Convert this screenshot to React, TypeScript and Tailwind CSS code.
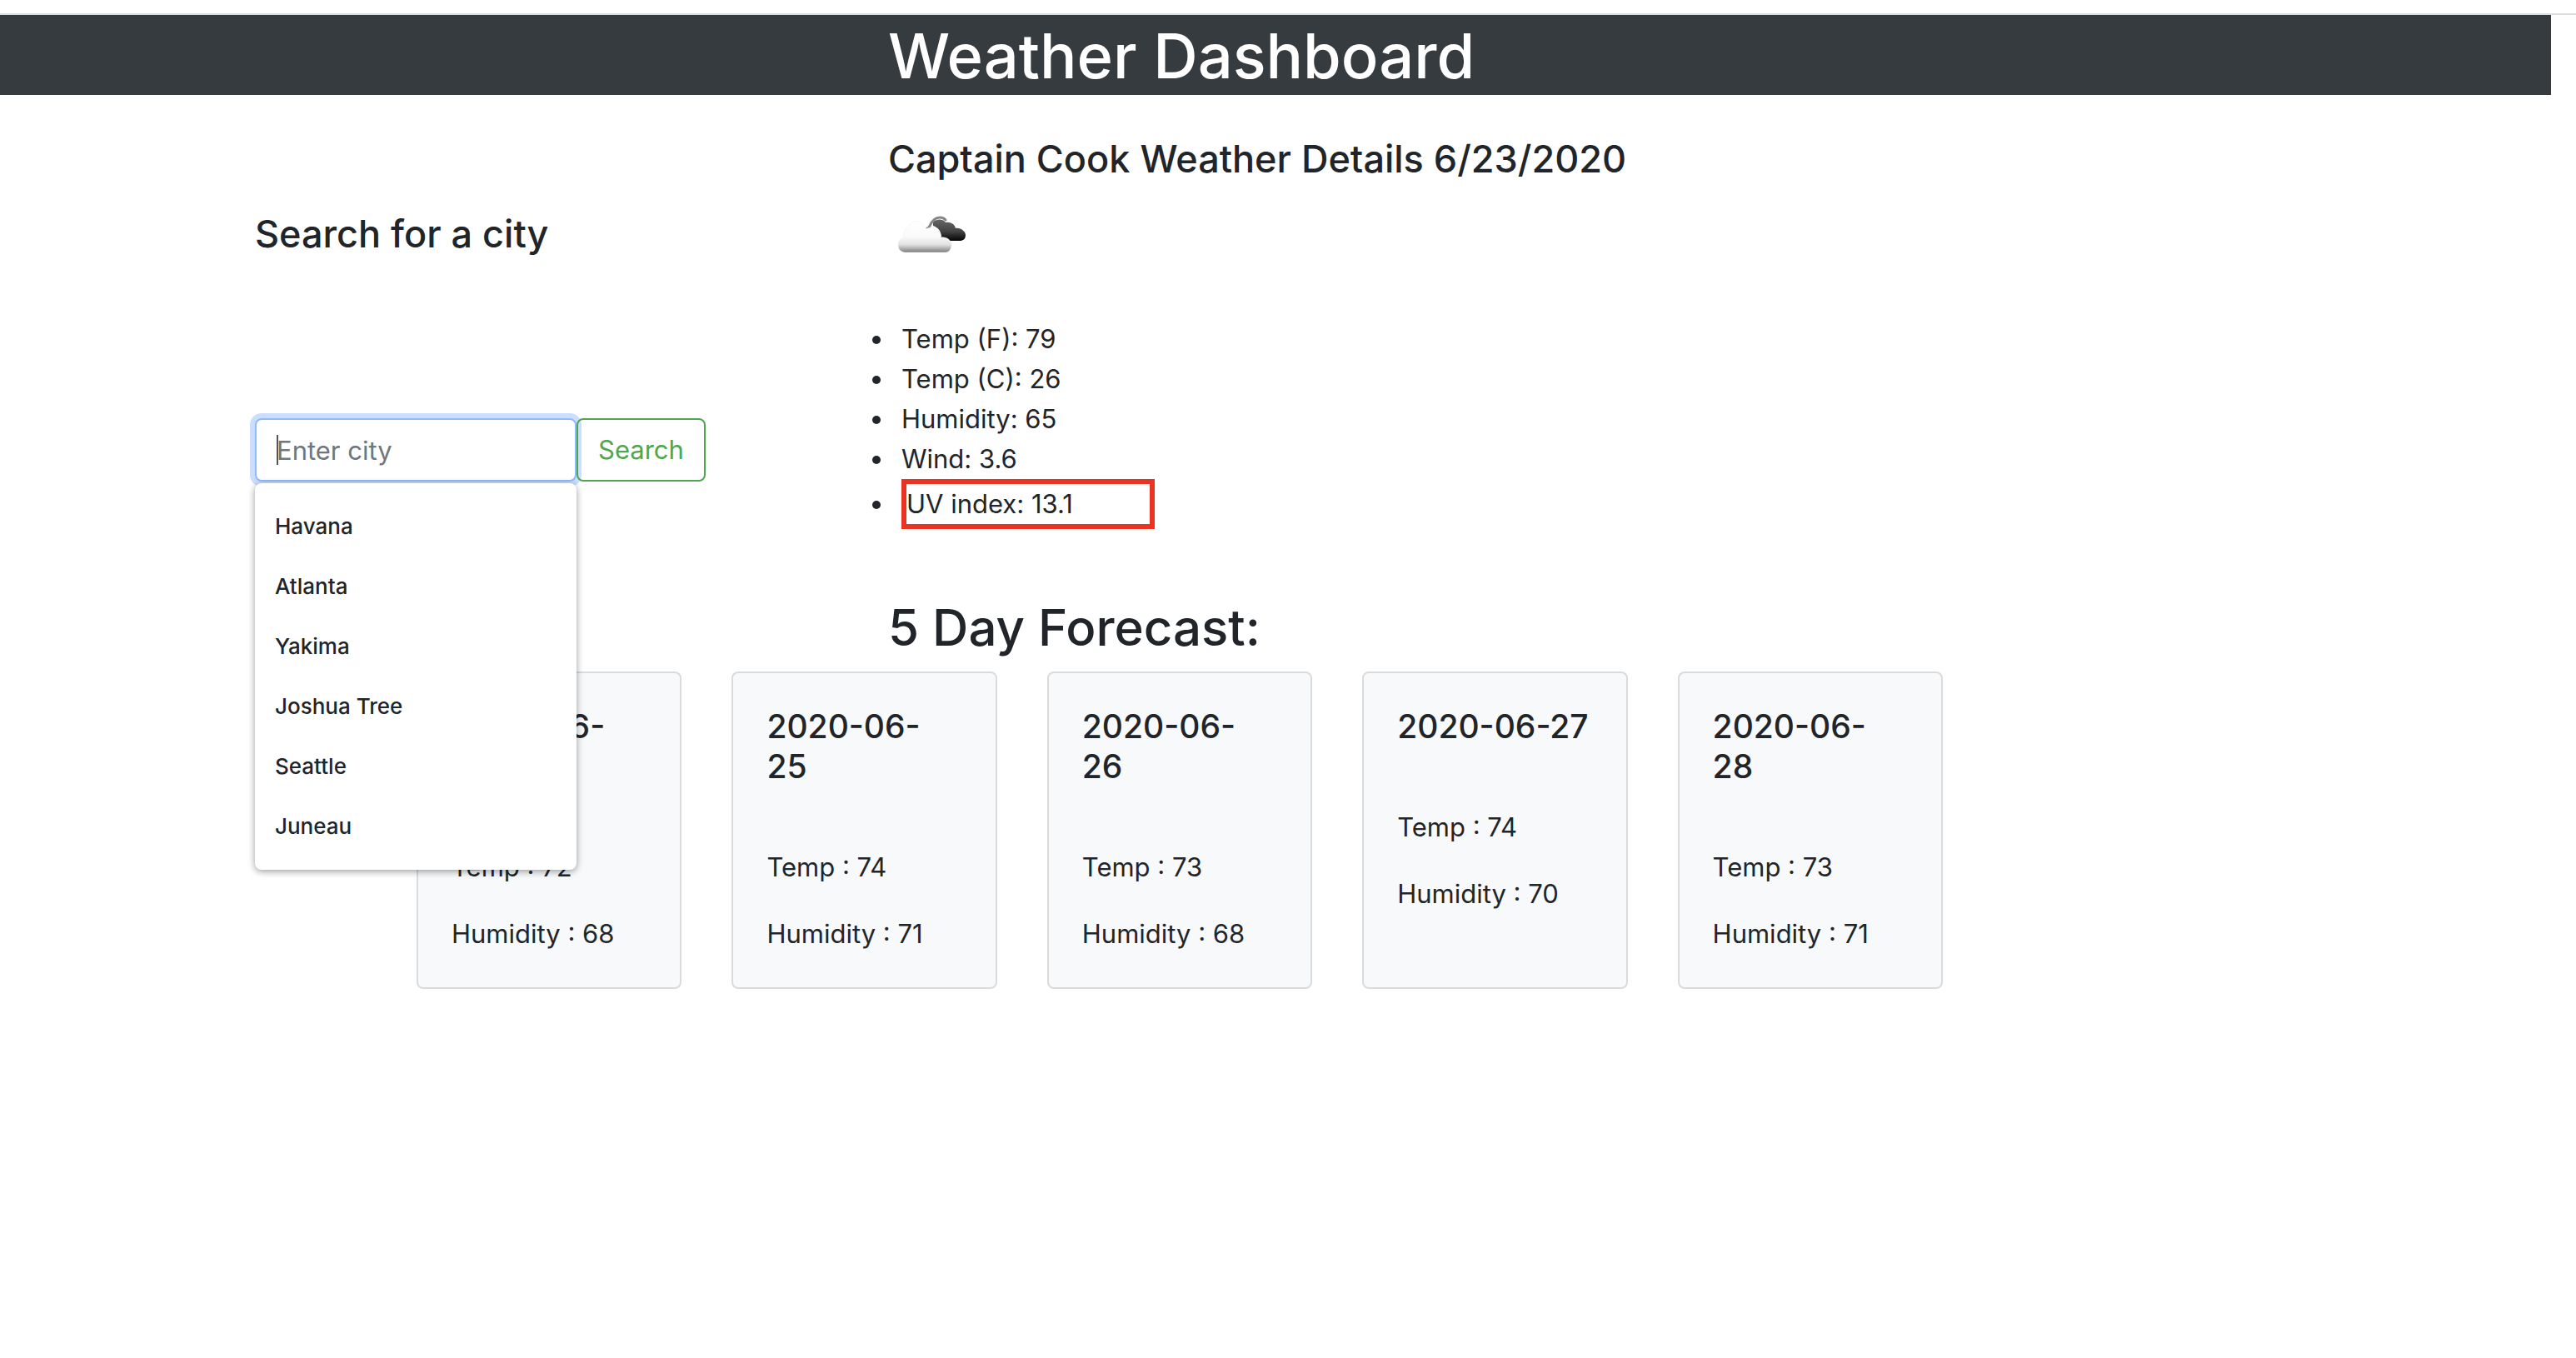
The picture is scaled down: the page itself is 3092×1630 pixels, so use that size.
const cities = ["Havana", "Atlanta", "Yakima", "Joshua Tree", "Seattle", "Juneau"];

const readings = ["Temp (F): 79", "Temp (C): 26", "Humidity: 65", "Wind: 3.6"];

const forecast = [
  { date: ["2020-06-", "24"], temp: 72, humidity: 68 },
  { date: ["2020-06-", "25"], temp: 74, humidity: 71 },
  { date: ["2020-06-", "26"], temp: 73, humidity: 68 },
  { date: ["2020-06-27"], temp: 74, humidity: 70 },
  { date: ["2020-06-", "28"], temp: 73, humidity: 71 },
];

function BrokenClouds() {
  return (
    <svg viewBox="0 0 100 100" className="size-[100px]" role="img" aria-label="Broken clouds">
      <defs>
        <linearGradient id="front" x1="0" y1="0" x2="0" y2="1">
          <stop offset="0" stopColor="#ffffff" />
          <stop offset="0.5" stopColor="#fafafa" />
          <stop offset="0.75" stopColor="#e2e2e2" />
          <stop offset="0.9" stopColor="#a6a6a6" />
          <stop offset="1" stopColor="#777777" />
        </linearGradient>
        <linearGradient id="back" x1="0" y1="0" x2="0" y2="1">
          <stop offset="0" stopColor="#666666" />
          <stop offset="0.55" stopColor="#444444" />
          <stop offset="1" stopColor="#050505" />
        </linearGradient>
      </defs>
      <path
        d="M47 42 C51 41 50 36 54 33 C58 28 65 28 69 32"
        fill="none"
        stroke="#858585"
        strokeWidth="3"
        strokeLinecap="round"
      />
      <path
        d="M54 35 C57 31 65 30 69 35 C75 34 80 37 81 42 C87 41 93 46 93 50 C93 55 90 57 86 57 L68 57 C64 56 63 54 64 51 C63 45 60 41 54 39 Z"
        fill="url(#back)"
      />
      <path
        d="M20 71 C14 70 12 66 12 62 C12 57 15 54 19 53 C18 46 21 41 26 38 C29 32 38 32 42 38 C43 40 44 41 45 43 C54 38 63 44 63 53 C70 52 76 56 76 62 C76 67 73 71 69 71 Z"
        fill="url(#front)"
        stroke="#f0f0f0"
        strokeWidth="0.6"
      />
    </svg>
  );
}

export default function App() {
  return (
    <div className="min-h-screen bg-white pt-4 font-['Inter',sans-serif] text-[31px] leading-[48px] text-[#212529]">
      <div className="h-0.5 bg-[#dadce0]" />
      <header className="mr-[30px] bg-[#363b3f]">
        <h1 className="mx-auto max-w-[2450px] pt-0.5 pl-[760px] text-[74px] leading-[94px] font-medium text-white">
          Weather Dashboard
        </h1>
      </header>

      <main className="mx-auto max-w-[2480px]">
        <div className="grid grid-cols-[760px_1fr] pt-12">
          <section className="pt-[90px]">
            <h4 className="text-[45px] leading-[58px] font-medium">
              <label htmlFor="city">Search for a city</label>
            </h4>
            <form className="mt-[192px] flex">
              <div className="relative z-10 w-[386px]">
                <input
                  id="city"
                  type="text"
                  placeholder="Enter city"
                  autoComplete="off"
                  className="block h-[76px] w-full rounded-lg border-2 border-[#8ebcfa] bg-white px-6 ring-6 ring-[#cbdefe] outline-none placeholder:text-[#6f777e] placeholder:opacity-100"
                />
                <span aria-hidden="true" className="absolute top-5 left-[26px] h-9 w-0.5 bg-[#50555a]" />
                <ul className="absolute top-[78px] left-0 w-full rounded-lg bg-white py-4 text-[26px] leading-[72px] font-medium shadow-[0_2px_8px_rgba(0,0,0,0.4)]">
                  {cities.map((city) => (
                    <li key={city} className="px-6">
                      {city}
                    </li>
                  ))}
                </ul>
              </div>
              <button
                type="button"
                className="relative z-20 h-[76px] rounded-lg border-2 border-[#50a64f] px-6 text-[#50a64f]"
              >
                Search
              </button>
            </form>
          </section>

          <section>
            <h4 className="text-[45px] leading-[58px] font-medium">
              Captain Cook Weather Details 6/23/2020
            </h4>
            <div className="mt-3">
              <BrokenClouds />
            </div>
            <ul className="mt-[51px] list-disc pl-2">
              {readings.map((reading) => (
                <li key={reading} className="pl-2">
                  {reading}
                </li>
              ))}
              <li className="pl-2">
                <div className="w-[304px] border-6 border-[#eb3323]">UV index: 13.1</div>
              </li>
            </ul>
          </section>
        </div>

        <h2 className="pt-20 pl-[760px] text-[60px] leading-[77px] font-medium">5 Day Forecast:</h2>
        <div className="mt-3.5 ml-[194px] grid max-w-[1832px] grid-cols-5 gap-[60px]">
          {forecast.map((day) => (
            <article
              key={day.date.join("")}
              className="rounded-lg border-2 border-[#d9dbdd] bg-[#f8f9fb] p-10"
            >
              <h5 className="mb-[73px] text-[39px] leading-[48px] font-medium whitespace-nowrap">
                {day.date.map((part) => (
                  <span key={part} className="block">
                    {part}
                  </span>
                ))}
              </h5>
              <p className="mb-8">Temp : {day.temp}</p>
              <p>Humidity : {day.humidity}</p>
            </article>
          ))}
        </div>
      </main>
    </div>
  );
}
